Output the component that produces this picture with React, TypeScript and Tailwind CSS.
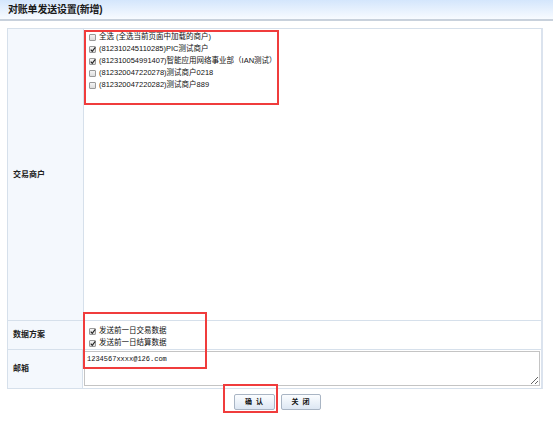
import React from "react";

const font = { fontFamily: '"Liberation Sans", "Noto Sans CJK SC", sans-serif' };

function Box({ checked }: { checked?: boolean }) {
  return (
    <span className="relative inline-block w-[7px] h-[7px] border border-[#9a9a9a] rounded-[1px] bg-gradient-to-b from-[#f4f4f4] to-[#dcdcdc] shrink-0">
      {checked && (
        <svg viewBox="0 0 8 8" className="absolute left-[0px] top-[-1px] w-[6px] h-[7px]">
          <path d="M1 4.2 L3 6.4 L7 1.2" stroke="#222" strokeWidth="1.5" fill="none" />
        </svg>
      )}
    </span>
  );
}

function Row({ checked, children }: { checked?: boolean; children: React.ReactNode }) {
  return (
    <div className="flex items-center gap-[3px] h-[12px] text-[7.5px] text-[#111] leading-none whitespace-nowrap">
      <Box checked={checked} />
      <span>{children}</span>
    </div>
  );
}

export default function App() {
  return (
    <div className="relative w-[553px] h-[422px] bg-white" style={font}>
      <div className="h-[21px] bg-gradient-to-b from-[#d4e6fc] to-[#f8fbff] border-b-2 border-[#c8d1dc] flex items-center pl-[8px]">
        <span className="text-[10px] font-bold text-[#1a1a1a] tracking-[-0.2px]">对账单发送设置(新增)</span>
      </div>

      <div className="ml-[7px] mt-[7px] w-[536px] border border-[#d6e0eb] border-r-2 border-r-[#dbe3ee]">
        <div className="flex h-[292px] border-b border-[#d6e0eb]">
          <div className="w-[76px] bg-[#f4f8fd] border-r border-[#d6e0eb] flex items-center pl-[5px] text-[8px] font-bold text-[#222]">
            交易商户
          </div>
          <div className="flex-1 pl-[5px] pt-[2px]">
            <Row>全选 (全选当前页面中加载的商户)</Row>
            <Row checked>(812310245110285)PIC测试商户</Row>
            <Row checked>(812310054991407)智能应用网络事业部（IAN测试）</Row>
            <Row>(812320047220278)测试商户0218</Row>
            <Row>(812320047220282)测试商户889</Row>
          </div>
        </div>

        <div className="flex h-[29px] border-b border-[#d6e0eb]">
          <div className="w-[76px] bg-[#f4f8fd] border-r border-[#d6e0eb] flex items-center pl-[5px] text-[8px] font-bold text-[#222]">
            数据方案
          </div>
          <div className="flex-1 pl-[5px] pt-[4px]">
            <Row checked>发送前一日交易数据</Row>
            <Row checked>发送前一日结算数据</Row>
          </div>
        </div>

        <div className="flex h-[38px]">
          <div className="w-[76px] bg-[#f4f8fd] border-r border-[#d6e0eb] flex items-center pl-[5px] text-[8px] font-bold text-[#222]">
            邮箱
          </div>
          <div className="flex-1 pl-[1px] pr-[1px] pt-[1px]">
            <textarea
              readOnly
              defaultValue="1234567xxxx@126.com"
              className="block w-[456px] h-[35px] border border-[#c4c4c4] px-[2px] py-[2px] text-[7px] text-[#111] outline-none"
              style={{ fontFamily: '"Liberation Mono", monospace' }}
            />
          </div>
        </div>
      </div>

      <div className="flex justify-center gap-[6px] mt-[5px] pl-[1px]">
        <button className="w-[41px] h-[16px] border border-[#a9b5c4] rounded-[2px] bg-gradient-to-b from-[#fbfdff] to-[#dde7f3] text-[7px] font-bold text-[#111] tracking-[4px] pl-[4px]">
          确认
        </button>
        <button className="w-[40px] h-[16px] border border-[#a9b5c4] rounded-[2px] bg-gradient-to-b from-[#fbfdff] to-[#dde7f3] text-[7px] font-bold text-[#111] tracking-[4px] pl-[4px]">
          关闭
        </button>
      </div>

      <div className="absolute left-[84px] top-[30px] w-[195px] h-[75px] border-2 border-[#f03c3c]" />
      <div className="absolute left-[83px] top-[312px] w-[124px] h-[57px] border-2 border-[#f03c3c]" />
      <div className="absolute left-[223px] top-[384px] w-[55px] h-[29px] border-2 border-[#f03c3c]" />
    </div>
  );
}
